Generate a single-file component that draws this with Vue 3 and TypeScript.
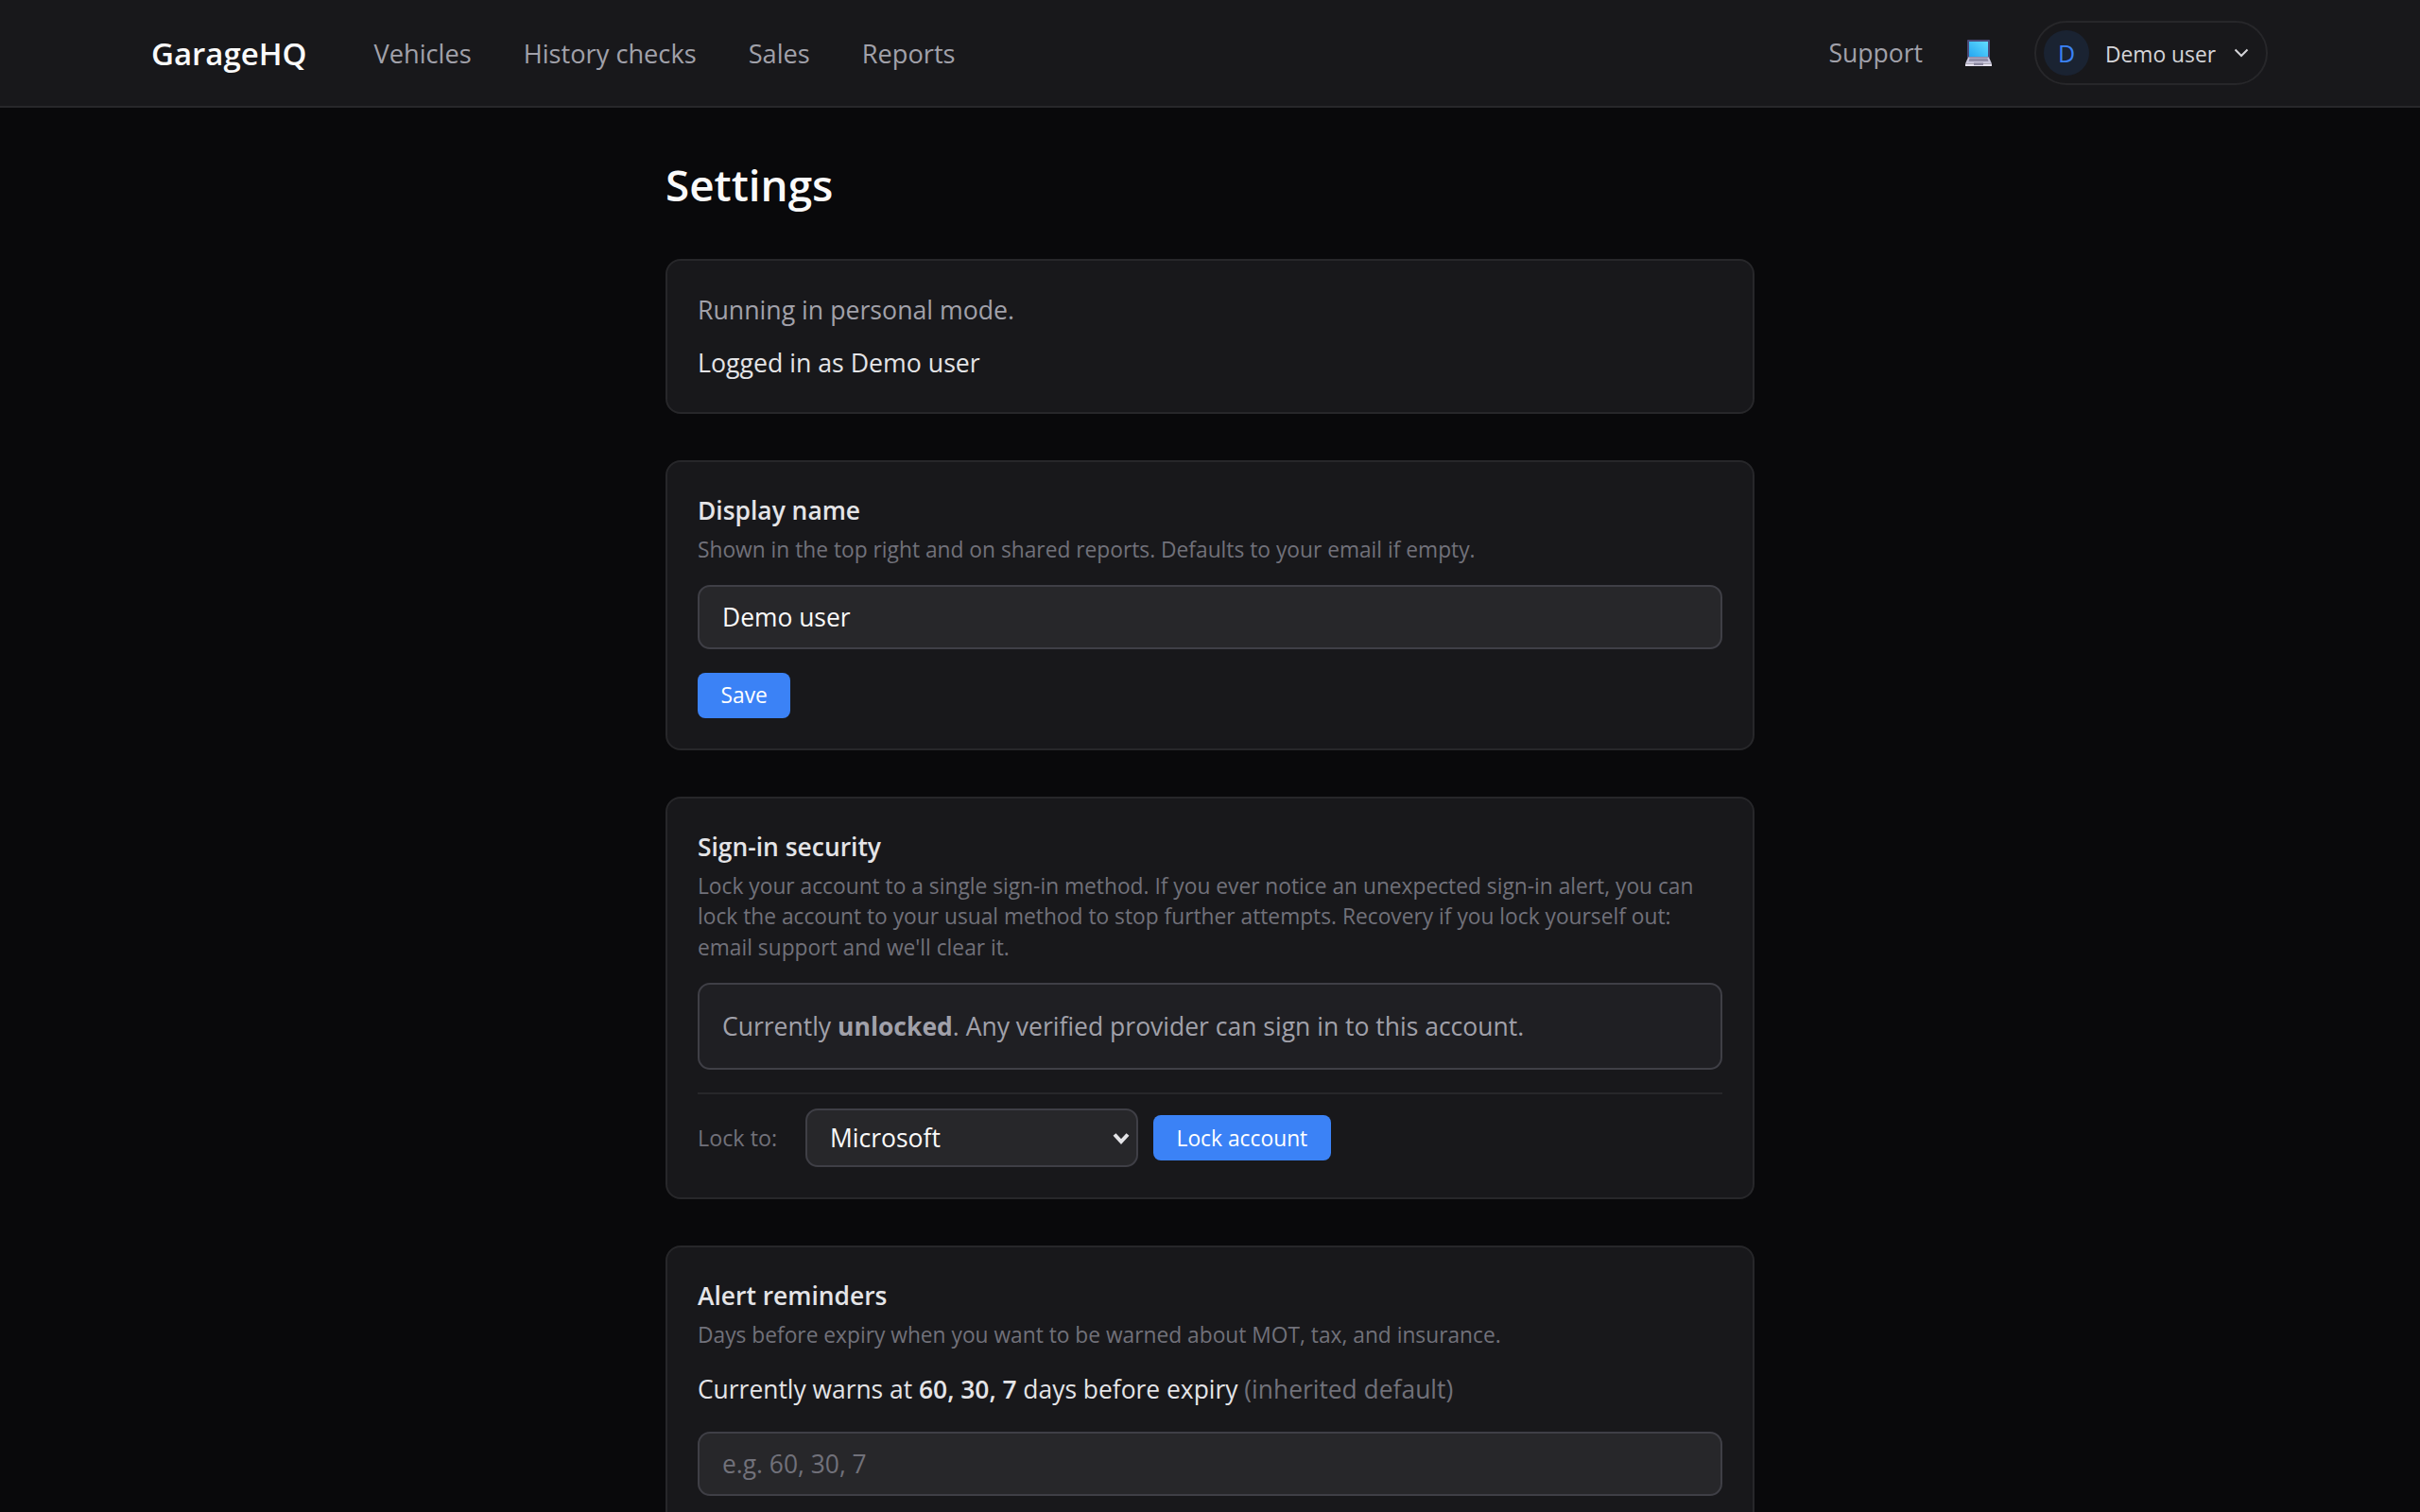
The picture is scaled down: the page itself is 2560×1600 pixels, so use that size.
<script setup lang="ts">
import { ref } from 'vue';

const navLinks = ['Vehicles', 'History checks', 'Sales', 'Reports'];
const displayName = ref('Demo user');
const lockProvider = ref('Microsoft');
const providers = ['Microsoft', 'Google', 'Email'];
const reminderDays = ref('');
</script>

<template>
  <div class="page">
    <header class="topbar">
      <div class="topbar-left">
        <span class="logo">GarageHQ</span>
        <nav class="nav-links">
          <a v-for="link in navLinks" :key="link" class="nav-link">{{ link }}</a>
        </nav>
      </div>
      <div class="topbar-right">
        <a class="support-link">Support</a>
        <!-- Theme toggle, drawn as the laptop emoji -->
        <svg class="theme-icon" viewBox="0 0 28 28" aria-hidden="true">
          <path d="M3 0h22a1 1 0 0 1 1 1v18H2V1a1 1 0 0 1 1-1z" fill="#4b4a78" />
          <path d="M4 2h20v16H4z" fill="url(#screen)" />
          <path d="M3 18.500h22l3 7H0z" fill="#c9c6dc" />
          <path d="M0 25.500h28V28H0z" fill="#e6e2f0" />
          <path d="M4.500 19.500h19l1 3.500h-21z" fill="#8f8ca6" />
          <path d="M9 24.500h10V27H9z" fill="#8a879f" />
          <defs>
            <linearGradient id="screen" x1="1" y1="0" x2="0" y2="1">
              <stop offset="0" stop-color="#62dcff" />
              <stop offset="1" stop-color="#25a6f0" />
            </linearGradient>
          </defs>
        </svg>
        <button class="user-pill" type="button">
          <span class="avatar">D</span>
          <span class="user-name">Demo user</span>
          <svg class="chevron" viewBox="0 0 16 10" aria-hidden="true">
            <path d="M1.500 1.500 8 8l6.500-6.500" fill="none" stroke="currentColor" stroke-width="2" />
          </svg>
        </button>
      </div>
    </header>

    <main class="content">
      <h1 class="page-title">Settings</h1>

      <section class="card">
        <p class="muted-line">Running in personal mode.</p>
        <p class="plain-line">Logged in as Demo user</p>
      </section>

      <section class="card">
        <h2 class="card-title">Display name</h2>
        <p class="card-desc">Shown in the top right and on shared reports. Defaults to your email if empty.</p>
        <input v-model="displayName" class="text-input" type="text" />
        <button class="btn save-btn" type="button">Save</button>
      </section>

      <section class="card">
        <h2 class="card-title">Sign-in security</h2>
        <p class="card-desc">
          Lock your account to a single sign-in method. If you ever notice an unexpected sign-in alert, you can
          lock the account to your usual method to stop further attempts. Recovery if you lock yourself out:
          email support and we'll clear it.
        </p>
        <div class="status-box">Currently <strong>unlocked</strong>. Any verified provider can sign in to this account.</div>
        <div class="lock-row">
          <label class="lock-label">Lock to:</label>
          <select v-model="lockProvider" class="lock-select">
            <option v-for="p in providers" :key="p">{{ p }}</option>
          </select>
          <button class="btn" type="button">Lock account</button>
        </div>
      </section>

      <section class="card">
        <h2 class="card-title">Alert reminders</h2>
        <p class="card-desc">Days before expiry when you want to be warned about MOT, tax, and insurance.</p>
        <p class="warn-line">Currently warns at <strong>60, 30, 7</strong> days before expiry <span class="inherited">(inherited default)</span></p>
        <input v-model="reminderDays" class="text-input" type="text" placeholder="e.g. 60, 30, 7" />
      </section>
    </main>
  </div>
</template>

<style>
html,
body {
  margin: 0;
  background: #09090b;
}
</style>

<style scoped>
.page {
  height: 100vh;
  overflow: hidden;
  background: #09090b;
  color: #e4e4e7;
  font-family: "Open Sans", "Noto Sans", sans-serif;
  font-size: 26.7px;
}

.topbar {
  display: flex;
  justify-content: space-between;
  align-items: center;
  height: 112px;
  padding: 0 161px 0 160px;
  background: #18181b;
  border-bottom: 2px solid #27272a;
}

.topbar-left,
.topbar-right {
  display: flex;
  align-items: center;
}

.logo {
  font-size: 33px;
  font-weight: 600;
  color: #fafafa;
  margin-right: 71px;
}

.nav-links {
  display: flex;
  gap: 55px;
}

.nav-link {
  font-size: 27.2px;
  font-weight: 500;
  color: #a1a1aa;
}

.support-link {
  font-size: 26.5px;
  color: #a1a1aa;
}

.theme-icon {
  width: 28px;
  height: 28px;
  margin: 0 45px;
}

.user-pill {
  display: flex;
  align-items: center;
  height: 68px;
  width: 247px;
  box-sizing: border-box;
  padding: 0 18px 0 8px;
  background: transparent;
  border: 2px solid #27272a;
  border-radius: 34px;
  color: #d4d4d8;
  font: inherit;
  font-size: 22.8px;
}

.avatar {
  display: flex;
  align-items: center;
  justify-content: center;
  width: 48px;
  height: 48px;
  flex: none;
  border-radius: 50%;
  background: #1a2332;
  color: #3b82f6;
  font-size: 25px;
  font-weight: 500;
}

.user-name {
  margin-left: 17px;
  padding-top: 2px;
}

.chevron {
  width: 16px;
  height: 10px;
  margin-left: auto;
}

.content {
  width: 1152px;
  margin: 0 auto;
  padding-top: 56px;
}

.page-title {
  margin: 0 0 54px;
  font-size: 45.8px;
  line-height: 50px;
  font-weight: 600;
  color: #fafafa;
}

.card {
  box-sizing: border-box;
  padding: 33px 32px 32px;
  margin-bottom: 49px;
  background: #18181b;
  border: 2px solid #27272a;
  border-radius: 16px;
}

.muted-line,
.plain-line {
  margin: 0;
  line-height: 38.4px;
}

.muted-line {
  color: #a1a1aa;
}

.plain-line {
  margin-top: 18px;
  color: #e4e4e7;
}

.card-title {
  margin: 0;
  font-size: 26.4px;
  line-height: 36px;
  font-weight: 600;
  color: #e4e4e7;
}

.card-desc {
  margin: 8px 0 21px;
  font-size: 22.75px;
  line-height: 32.5px;
  color: #71717a;
}

.text-input {
  display: block;
  box-sizing: border-box;
  width: 100%;
  height: 68px;
  padding: 0 24px;
  background: #27272a;
  border: 2px solid #3f3f46;
  border-radius: 13px;
  color: #fafafa;
  font: inherit;
  font-size: 26.4px;
  outline: none;
}

.text-input::placeholder {
  color: #71717a;
}

.btn {
  box-sizing: border-box;
  height: 48px;
  padding: 0 24.5px;
  background: #3b82f6;
  border: none;
  border-radius: 8px;
  color: #fff;
  font: inherit;
  font-size: 22.8px;
  font-weight: 500;
}

.save-btn {
  display: block;
  margin-top: 24.5px;
}

.status-box {
  display: flex;
  align-items: center;
  white-space: pre-wrap;
  box-sizing: border-box;
  height: 92px;
  padding: 0 24px;
  background: #1f1f23;
  border: 2px solid #3f3f46;
  border-radius: 13px;
  color: #a1a1aa;
  font-size: 26.5px;
}

.lock-row {
  display: flex;
  align-items: center;
  gap: 16px;
  margin-top: 24px;
  padding-top: 15px;
  border-top: 2px solid #27272a;
}

.lock-label {
  width: 83px;
  margin-right: 15px;
  white-space: nowrap;
  font-size: 23.3px;
  color: #71717a;
}

.lock-select {
  box-sizing: border-box;
  width: 352px;
  height: 62px;
  padding: 0 24px;
  appearance: none;
  background: #27272a url("data:image/svg+xml,%3Csvg xmlns='http://www.w3.org/2000/svg' viewBox='0 0 18 13'%3E%3Cpath d='M2 2.500 9 10l7-7.500' fill='none' stroke='%23e4e4e7' stroke-width='4'/%3E%3C/svg%3E") no-repeat right 7px center / 18px 13px;
  border: 2px solid #3f3f46;
  border-radius: 13px;
  color: #fafafa;
  font: inherit;
  font-size: 26.5px;
}

.warn-line {
  margin: 0 0 26px;
  font-size: 26.4px;
  line-height: 38.4px;
  color: #e4e4e7;
}

.warn-line strong {
  font-weight: 600;
}

.inherited {
  color: #71717a;
}
</style>
